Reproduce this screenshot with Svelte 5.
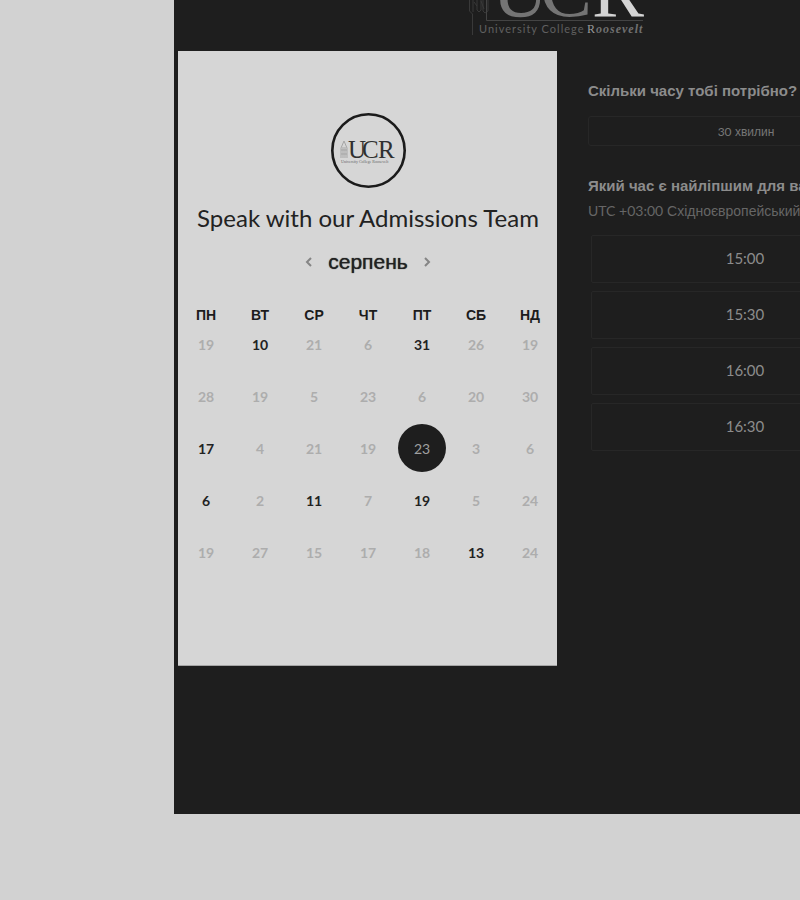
<script>
  const weekdays = ['ПН', 'ВТ', 'СР', 'ЧТ', 'ПТ', 'СБ', 'НД'];
  const weeks = [
    [19, 10, 21, 6, 31, 26, 19],
    [28, 19, 5, 23, 6, 20, 30],
    [17, 4, 21, 19, 23, 3, 6],
    [6, 2, 11, 7, 19, 5, 24],
    [19, 27, 15, 17, 18, 13, 24]
  ];
  // row-column keys of the days that can be booked
  const open = new Set(['0-1', '0-4', '2-0', '2-4', '3-0', '3-2', '3-4', '4-5']);
  const times = ['15:00', '15:30', '16:00', '16:30'];
  let selected = $state('2-4');
</script>

<main class="page">
  <div class="panel">
    <header>
      <svg class="logo" width="180" height="38" viewBox="0 0 180 38" role="img" aria-label="University College Roosevelt">
        <g fill="none" stroke="#393939">
          <path d="M1.500 0V11l3 3V35M5 0V12M9 0V10l2 2 2-2V0M15 0V11l2 2 3-2V0M6 2l3 4M13 1l3 8" />
          <path d="M18.500 0V20.500H175" stroke="#444" />
        </g>
        <g class="mark">
          <text x="24" y="16" fill="#747474">U</text>
          <text x="72" y="16" fill="#747474">C</text>
          <text x="124" y="16" fill="#d4d4d4">R</text>
        </g>
        <text class="name" x="11" y="33">University College</text>
        <text class="surname" x="119" y="33"><tspan class="first">R</tspan>oosevelt</text>
      </svg>
    </header>

    <div class="booking">
      <section class="calendar">
        <svg class="avatar" width="75" height="75" viewBox="0 0 75 75" aria-hidden="true">
          <circle cx="37.500" cy="37.500" r="36.200" fill="none" stroke="#1b1b1b" stroke-width="2.600" />
          <path d="M10 45V35l3-7 3 7v10M12 45V34M14 45V34M10 37h6M10 41h6" fill="none" stroke="#a5a5a5" />
          <g class="small-mark">
            <text x="17" y="45">U</text>
            <text x="31" y="45">C</text>
            <text x="47" y="45">R</text>
          </g>
          <text class="small-name" x="10" y="50">University College Roosevelt</text>
        </svg>
        <h1>Speak with our Admissions Team</h1>
        <div class="month">
          <button aria-label="Попередній місяць">
            <svg width="8" height="10" viewBox="0 0 8 10"><path d="M6 1 2 5l4 4" /></svg>
          </button>
          <h2>серпень</h2>
          <button aria-label="Наступний місяць">
            <svg width="8" height="10" viewBox="0 0 8 10"><path d="m2 1 4 4-4 4" /></svg>
          </button>
        </div>
        <table>
          <thead>
            <tr>
              {#each weekdays as day}<th scope="col">{day}</th>{/each}
            </tr>
          </thead>
          <tbody>
            {#each weeks as week, row}
              <tr>
                {#each week as day, column}
                  {@const key = `${row}-${column}`}
                  <td>
                    <button
                      class="day"
                      class:selected={selected === key}
                      disabled={!open.has(key)}
                      onclick={() => (selected = key)}>{day}</button>
                  </td>
                {/each}
              </tr>
            {/each}
          </tbody>
        </table>
      </section>

      <section class="options">
        <h3>Скільки часу тобі потрібно?</h3>
        <button class="duration"><span class="latin">30</span> хвилин</button>
        <h3>Який час є найліпшим для вас?</h3>
        <p class="zone"><span class="latin">UTC +03:00</span> Східноєвропейський час</p>
        <div class="times">
          {#each times as time}<button class="time">{time}</button>{/each}
        </div>
      </section>
    </div>
  </div>
</main>

<style>
  :global(body) {
    margin: 0;
    background: #d2d2d2;
  }
  .page {
    min-height: 100vh;
    box-sizing: border-box;
    padding: 0 0 86px 174px;
    overflow: hidden;
    font-family: "Liberation Sans", Arial, sans-serif;
  }
  .panel {
    width: max-content;
    min-width: 100%;
    box-sizing: border-box;
    padding: 0 32px 148px 4px;
    background: #1e1e1e;
  }
  header {
    height: 51px;
    padding-left: 290px;
  }
  h1, h2, h3, p {
    margin: 0;
  }
  button {
    padding: 0;
    border: 0;
    background: none;
    font: inherit;
    color: inherit;
  }
  .logo, .avatar {
    display: block;
  }
  .mark, .small-mark {
    font-family: "Liberation Serif", serif;
    font-size: 78px;
  }
  .name {
    font: 11px Lato, sans-serif;
    letter-spacing: 1px;
    fill: #606060;
  }
  .surname {
    font: italic bold 12px "Liberation Serif", serif;
    letter-spacing: 1px;
    fill: #707070;
  }
  .first {
    font-style: normal;
    font-weight: normal;
    fill: #999;
  }
  .small-mark {
    font-size: 25px;
    fill: #303030;
  }
  .small-name {
    font: 4px "Liberation Serif", serif;
    fill: #666;
  }
  .booking {
    display: flex;
    gap: 31px;
  }
  .calendar {
    flex: 0 0 379px;
    box-sizing: border-box;
    display: flex;
    flex-direction: column;
    align-items: center;
    padding: 62px 0 87px 1px;
    border-bottom: 1px solid #a5a5a5;
    background: #d6d6d6;
    color: #222;
  }
  h1 {
    margin-top: 14px;
    font: 24px/32px Lato, sans-serif;
    white-space: nowrap;
  }
  .month {
    display: flex;
    align-items: center;
    gap: 15px;
    margin-top: 14px;
  }
  .month button {
    display: flex;
  }
  .month path {
    fill: none;
    stroke: #858585;
    stroke-width: 2;
  }
  h2 {
    font-size: 21px;
    font-weight: normal;
    line-height: 28px;
    text-shadow: 0 0 1px #222;
  }
  table {
    width: 100%;
    margin-top: 12px;
    border-collapse: collapse;
    table-layout: fixed;
  }
  th {
    height: 30px;
    padding: 0;
    vertical-align: bottom;
    font-size: 14px;
    line-height: 6px;
    color: #1c1c1c;
  }
  td {
    height: 52px;
    padding: 0;
    text-align: center;
  }
  .day {
    width: 48px;
    height: 48px;
    border-radius: 50%;
    font: bold 14px Lato, sans-serif;
    vertical-align: middle;
  }
  .day:disabled {
    color: #adadad;
  }
  .day.selected {
    background: #1e1e1e;
    color: #a0a0a0;
    font-weight: normal;
  }
  .options {
    flex: 0 0 316px;
    display: flex;
    flex-direction: column;
    padding-top: 30px;
    color: #8c8c8c;
  }
  h3 {
    font-size: 15px;
    line-height: 20px;
    white-space: nowrap;
  }
  .duration {
    height: 30px;
    margin: 15px 0 30px;
    border: 1px solid #272727;
    border-radius: 3px;
    font-size: 12px;
    color: #777;
  }
  .latin {
    font-family: Lato, sans-serif;
  }
  .zone {
    margin-top: 5px;
    font-size: 14px;
    line-height: 20px;
    color: #666;
    white-space: nowrap;
  }
  .times {
    display: flex;
    flex-direction: column;
    gap: 8px;
    margin-top: 14px;
    padding: 0 5px 0 3px;
  }
  .time {
    height: 48px;
    padding-bottom: 2px;
    border: 1px solid #272727;
    border-radius: 2px;
    font: 15px Lato, sans-serif;
    color: #8c8c8c;
  }
</style>
